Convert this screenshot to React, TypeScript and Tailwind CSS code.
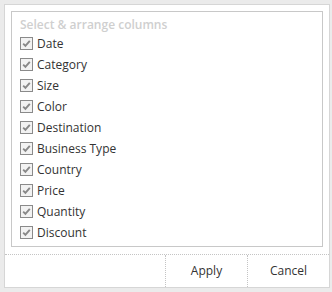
import { useState } from 'react';

const COLUMNS = [
    'Date',
    'Category',
    'Size',
    'Color',
    'Destination',
    'Business Type',
    'Country',
    'Price',
    'Quantity',
    'Discount',
];

const CheckBox = ({ checked, onClick }: { checked: boolean; onClick: () => void }) => (
    <span
        onClick={onClick}
        className="flex h-[13px] w-[13px] shrink-0 items-center justify-center border border-[#8a8a8a] bg-[#f2f2f2]"
    >
        {checked && (
            <svg width="9" height="9" viewBox="0 0 9 9">
                <path d="M1.2 4.6 L3.4 6.8 L7.8 1.8" fill="none" stroke="#888" strokeWidth="1.9" />
            </svg>
        )}
    </span>
);

const App = () => {
    const [checked, setChecked] = useState<boolean[]>(COLUMNS.map(() => true));

    const toggle = (i: number) =>
        setChecked((prev) => prev.map((c, j) => (j === i ? !c : c)));

    return (
        <div className="h-[292px] w-[332px] bg-[#ebebeb] p-1 font-['Open_Sans',sans-serif]">
            <div className="flex h-[284px] w-[326px] flex-col border border-[#d6d6d6] bg-white">
                {/* Column list */}
                <div className="mx-[6px] mt-[6px] h-[236px] border border-[#c8c8c8] px-[8px] pt-[5px]">
                    <p className="text-[12px] leading-[16px] font-semibold text-[#cfcfcf]">
                        Select &amp; arrange columns
                    </p>
                    <div className="flex flex-col">
                        {COLUMNS.map((c, i) => (
                            <label key={c} className="flex h-[21px] items-center gap-[4px]">
                                <CheckBox checked={checked[i]} onClick={() => toggle(i)} />
                                <span className="text-[12px] text-[#333]">{c}</span>
                            </label>
                        ))}
                    </div>
                </div>

                {/* Footer */}
                <div className="mt-auto flex h-[33px] border-t border-dotted border-[#c4c4c4]">
                    <div className="flex-1" />
                    <button className="w-[82px] border-l border-dotted border-[#c4c4c4] text-[12px] text-[#333]">
                        Apply
                    </button>
                    <button className="w-[82px] border-l border-dotted border-[#c4c4c4] text-[12px] text-[#333]">
                        Cancel
                    </button>
                </div>
            </div>
        </div>
    );
};

export default App;
